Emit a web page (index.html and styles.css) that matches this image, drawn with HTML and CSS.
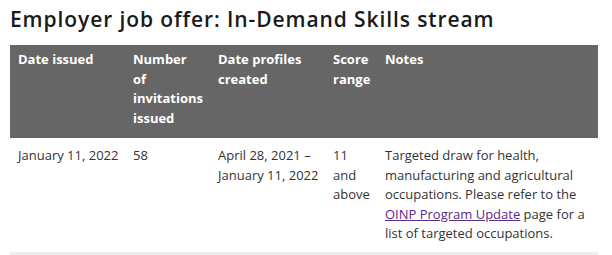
FILE: index.html
```html
<!DOCTYPE html>
<html lang="en">
<head>
<meta charset="utf-8">
<title>Employer job offer: In-Demand Skills stream</title>
<link rel="stylesheet" href="styles.css">
</head>
<body>
<h2 class="title">Employer job offer: In-Demand Skills stream</h2>
<table class="draws">
  <colgroup>
    <col class="c1"><col class="c2"><col class="c3"><col class="c4"><col class="c5">
  </colgroup>
  <thead>
    <tr>
      <th>Date issued</th>
      <th>Number of invitations issued</th>
      <th>Date profiles created</th>
      <th>Score range</th>
      <th>Notes</th>
    </tr>
  </thead>
  <tbody>
    <tr>
      <td>January 11, 2022</td>
      <td>58</td>
      <td>April 28, 2021 – January 11, 2022</td>
      <td>11 and above</td>
      <td>Targeted draw for health, manufacturing and agricultural occupations. Please refer to the <a href="#" class="link">OINP Program Update</a> page for a list of targeted occupations.</td>
    </tr>
  </tbody>
</table>
</body>
</html>
```
FILE: styles.css
```css
html, body {
  margin: 0;
  padding: 0;
  background: #fff;
}
body {
  padding: 0 10px;
  font-family: "Open Sans", "Liberation Sans", sans-serif;
  color: #333;
}
.title {
  margin: 0;
  padding-top: 5px;
  height: 45px;
  box-sizing: border-box;
  font-family: "Open Sans", "Noto Sans", sans-serif;
  font-weight: 600;
  font-size: 21px;
  letter-spacing: 0.9px;
  line-height: 28px;
  color: #1a1a1a;
}
.draws {
  width: 588px;
  border-collapse: collapse;
  table-layout: fixed;
  font-size: 13px;
  line-height: 19.5px;
}
.c1 { width: 115px; }
.c2 { width: 85px; }
.c3 { width: 115px; }
.c4 { width: 52px; }
.c5 { width: 221px; }
.draws th {
  background: #666;
  color: #fff;
  font-weight: 700;
  text-align: left;
  vertical-align: top;
  padding: 5px 8px 10px 8px;
}
.draws td {
  vertical-align: top;
  padding: 8px 6px 8px 8px;
  border-bottom: 3px solid #eee;
}
.link {
  color: #5b2a86;
  text-decoration: underline;
}
```
